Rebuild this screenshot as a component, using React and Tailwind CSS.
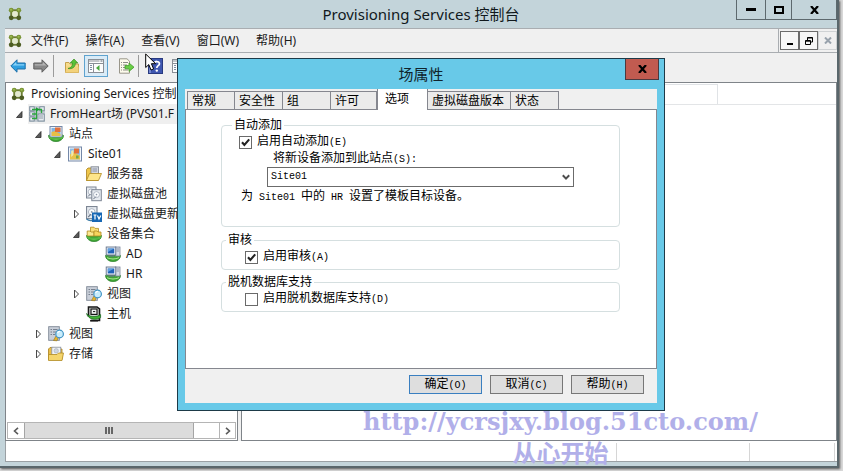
import React, { useState } from 'react';
import clsx from 'clsx';

// Console logo: four green nodes joined in a square
function NodesIcon({ className }) {
  return (
    <svg viewBox="0 0 14 14" className={clsx('h-[14px] w-[14px] shrink-0', className)}>
      <rect x="3.2" y="3.2" width="7.6" height="7.6" fill="#e4ead0" stroke="#6c7c35" strokeWidth="1.8" />
      <circle cx="3.2" cy="3.2" r="2.4" fill="#7a9436" />
      <circle cx="10.8" cy="3.2" r="2.4" fill="#7a9436" />
      <circle cx="3.2" cy="10.8" r="2.4" fill="#4c5c22" />
      <circle cx="10.8" cy="10.8" r="2.4" fill="#4c5c22" />
      <circle cx="3" cy="2.8" r="1" fill="#9dbb52" />
      <circle cx="10.6" cy="2.8" r="1" fill="#9dbb52" />
    </svg>
  );
}

function Svg16({ children }) {
  return (
    <svg viewBox="0 0 16 16" className="h-4 w-4 shrink-0">
      {children}
    </svg>
  );
}

function Dish() {
  return (
    <>
      <path d="M0.5 9.5C1.5 8 14.5 8 15.5 9.5C15.5 13 12 15.6 8 15.6S0.5 13 0.5 9.5Z" fill="#3fa535" stroke="#1f7a1f" strokeWidth="0.7" />
      <path d="M2 11.6C5 13.4 11 13.4 14 11.6" fill="none" stroke="#b4ec9c" strokeWidth="1.1" />
    </>
  );
}

function FarmIcon() {
  return (
    <Svg16>
      <rect width="16" height="16" fill="#c3cbd2" />
      <g fill="#e6ebf0" stroke="#6d7f90" strokeWidth="0.8">
        <rect x="0.8" y="0.8" width="4.4" height="4" />
        <rect x="10.8" y="0.8" width="4.4" height="4" />
        <rect x="0.8" y="5.9" width="4.4" height="4" />
        <rect x="0.8" y="11" width="4.4" height="4" />
        <rect x="9" y="8" width="6.2" height="7" />
      </g>
      <path d="M3 3.5H12.5V7M3 8H8M3 12.5H8M7.5 3.5V12.5" stroke="#2ba53c" strokeWidth="1.3" fill="none" />
      <path d="M7 1.2L10.4 3.5L7 5.8Z" fill="#199b33" />
      <path d="M10 10H14M10 12H14" stroke="#7a8794" strokeWidth="0.8" />
    </Svg16>
  );
}

function SitesIcon() {
  return (
    <Svg16>
      <Dish />
      <rect x="2" y="0.5" width="12" height="10.5" fill="#edf3fa" stroke="#7488a8" />
      <rect x="3.5" y="2" width="9" height="8" fill="#83b3e3" />
      <path d="M3.5 10V6L7 5L12.5 8V10Z" fill="#e6bf47" />
      <rect x="7" y="1.5" width="5.5" height="4.5" fill="#e2703a" />
      <path d="M1.2 10.2C4 12.4 12 12.4 14.8 10.2V12C12 14 4 14 1.2 12Z" fill="#54b844" />
    </Svg16>
  );
}

function SiteIcon() {
  return (
    <Svg16>
      <rect x="1.5" y="1" width="13" height="14" fill="#f4f7fb" stroke="#7488a8" />
      <rect x="3" y="2.5" width="10" height="11" fill="#8fc0e8" />
      <path d="M3 13.5V8.5L7 6L13 10V13.5Z" fill="#e8c34c" />
      <rect x="7" y="2.5" width="5" height="5" fill="#e2703a" />
      <path d="M4.2 5L6.4 4V9L4.2 11Z" fill="#f6e9a8" />
      <rect x="9" y="9.5" width="2.6" height="3" fill="#77a944" />
    </Svg16>
  );
}

function ServersIcon() {
  return (
    <Svg16>
      <path d="M0.5 14.5V3.5L2 2H5L6.5 3.5H12V14.5Z" fill="#efc64a" stroke="#a9801d" strokeWidth="0.8" />
      <rect x="5" y="0.8" width="7.6" height="8" fill="#d3d7df" stroke="#7a808c" strokeWidth="0.8" />
      <path d="M6.5 3H11M6.5 5H11" stroke="#8289a0" strokeWidth="0.9" />
      <path d="M0.5 14.5L3.5 7.5H15.5L12.5 14.5Z" fill="#fde58a" stroke="#b18a22" strokeWidth="0.8" />
    </Svg16>
  );
}

function DiskSheet({ x, y }) {
  return (
    <g transform={`translate(${x} ${y})`}>
      <rect x="0.5" y="0.5" width="9.5" height="11" fill="#e7ebf0" stroke="#7d8694" />
      <circle cx="5.2" cy="5.4" r="3" fill="#fafcfe" stroke="#a3acba" strokeWidth="0.8" />
      <circle cx="5.2" cy="5.4" r="0.8" fill="#8d97a8" />
      <path d="M2 10L4.6 7.4" stroke="#6d7889" />
    </g>
  );
}

function DiskPoolIcon() {
  return (
    <Svg16>
      <DiskSheet x={0} y={0.5} />
      <DiskSheet x={5.3} y={3.2} />
    </Svg16>
  );
}

function DiskUpdateIcon() {
  return (
    <Svg16>
      <g transform="scale(1.1)">
        <DiskSheet x={0} y={0} />
      </g>
      <path d="M0.5 13C3 15 5 15 7 14" stroke="#3f7da8" strokeWidth="1.4" fill="none" />
      <rect x="6" y="6.5" width="10" height="9.5" fill="#1767b4" />
      <path d="M7.5 9H10.5M9 9V13.5M11.5 9.5L13 13L14.8 9.5" stroke="#fff" strokeWidth="1.2" fill="none" />
    </Svg16>
  );
}

function CollectionsIcon() {
  return (
    <Svg16>
      <Dish />
      <path d="M4.5 7V1.2H8L9 2.4H12.5V7Z" fill="#f8df77" stroke="#b18a22" strokeWidth="0.8" />
      <path d="M1.2 10V5H4L5 6H8V10Z" fill="#fbe88f" stroke="#b18a22" strokeWidth="0.8" />
      <path d="M8 10V5H11L12 6H15V10Z" fill="#f6d55f" stroke="#b18a22" strokeWidth="0.8" />
      <path d="M1.2 10.2C4 12.4 12 12.4 14.8 10.2V12C12 14 4 14 1.2 12Z" fill="#54b844" />
    </Svg16>
  );
}

function DeviceIcon() {
  return (
    <Svg16>
      <Dish />
      <rect x="10.5" y="1" width="4.5" height="9" fill="#d5dbe6" stroke="#7a8699" strokeWidth="0.8" />
      <path d="M11.5 3H14M11.5 5H14" stroke="#7a8699" strokeWidth="0.8" />
      <rect x="1.2" y="1" width="9.6" height="8" fill="#e5eaf2" stroke="#66758c" strokeWidth="0.9" />
      <rect x="2.8" y="2.6" width="6.4" height="4.8" fill="#1f62b8" />
      <path d="M2.8 2.6H9.2L2.8 6Z" fill="#5f9fe0" />
      <path d="M3.5 10H9" stroke="#66758c" strokeWidth="1.2" />
    </Svg16>
  );
}

function ViewsIcon() {
  return (
    <Svg16>
      <rect x="0.7" y="0.7" width="10.6" height="13.6" fill="#c9cfd9" stroke="#7d8694" strokeWidth="0.9" />
      <path d="M2.5 3.5H4M5 3.5H9.5M2.5 6H4M5 6H8M2.5 8.5H4M5 8.5H7" stroke="#77808f" />
      <path d="M8 10L5.5 14.5L9 14.8L10 12Z" fill="#e5b530" stroke="#96731a" strokeWidth="0.6" />
      <circle cx="11.6" cy="8" r="3.8" fill="#c8ecfb" stroke="#3f93c4" strokeWidth="1.2" />
      <path d="M9.6 7A2.4 2.4 0 0 1 12 5.4" stroke="#fff" strokeWidth="1.1" fill="none" />
    </Svg16>
  );
}

function HostIcon() {
  return (
    <Svg16>
      <path d="M2.5 10.5V1H11L13.5 3V14.5H5" fill="#d9dfda" stroke="#171717" strokeWidth="1.6" />
      <rect x="5" y="3" width="6" height="5.4" fill="#f2f4f2" stroke="#171717" strokeWidth="1.2" />
      <path d="M7 5.6H9.2" stroke="#171717" />
      <path d="M0.6 7.5C2 11 11 11.5 14.6 8.6V11.6C11 14.4 2 14 0.6 7.5Z" fill="#41b335" stroke="#14601a" strokeWidth="0.7" />
      <path d="M4 14.8H12" stroke="#171717" strokeWidth="1.4" />
    </Svg16>
  );
}

function StoresIcon() {
  return (
    <Svg16>
      <path d="M0.5 13.5V3L2 1.5H5L6.5 3H14V13.5Z" fill="#e9bd45" stroke="#a9801d" strokeWidth="0.8" />
      <rect x="3.8" y="1.2" width="9" height="8" fill="#f1f3f6" stroke="#8b919c" strokeWidth="0.8" />
      <circle cx="8.2" cy="4.8" r="2.2" fill="#cfd6df" stroke="#a3acba" strokeWidth="0.6" />
      <path d="M0.5 14.5V8.5H9L10.5 7H15.5L14 14.5Z" fill="#f5d56c" stroke="#b18a22" strokeWidth="0.8" />
    </Svg16>
  );
}

function ArrowIcon({ fill, light, stroke, flip }) {
  return (
    <svg viewBox="0 0 16 16" className={clsx('h-4 w-4', flip && '-scale-x-100')}>
      <path d="M0.8 8L7 1.8V5H15.2V11H7V14.2Z" fill={fill} stroke={stroke} strokeLinejoin="round" />
      <path d="M2.6 7.6L6.2 4V6.2H14.2V7.6Z" fill={light} />
    </svg>
  );
}

function UpFolderIcon() {
  return (
    <Svg16>
      <path d="M1.5 14.5V4.5H5L6 6H14.5V14.5Z" fill="#f6dc8d" stroke="#c6a14c" />
      <path d="M1.5 14.5L2.5 8.5H14.5V14.5Z" fill="#f3d27b" />
      <path d="M4 10.5C7 10 8.6 8 8.6 5H6.2L10 1L13.8 5H11.4C11.4 9 8.5 11.4 4 10.5Z" fill="#5bc236" stroke="#3b8f24" strokeWidth="0.7" />
    </Svg16>
  );
}

function PaneIcon() {
  return (
    <svg viewBox="0 0 16 14" className="h-[14px] w-4">
      <rect x="0.5" y="0.5" width="15" height="13" fill="#fdfdfd" stroke="#8a8f96" />
      <path d="M1 2H11.5M1 4.5H15" stroke="#8a8f96" />
      <path d="M12.5 2H14.5" stroke="#55606c" />
      <path d="M5.5 5V13" stroke="#8a8f96" />
      <path d="M2 6.5H4M2 8.5H4M2 10.5H4" stroke="#7d8ea4" />
      <path d="M11.5 6V12L8 9Z" fill="#4aa83e" />
    </svg>
  );
}

function ExportIcon() {
  return (
    <Svg16>
      <path d="M1.5 0.8H9L11.5 3.2V15.2H1.5Z" fill="#fdfbec" stroke="#99968a" />
      <path d="M3 4.5H4M5 4.5H10M3 7H4M5 7H9M3 9.5H4M5 9.5H8M3 12H4M5 12H10" stroke="#8d8c86" />
      <path d="M7 7.6H11V5L16 9.2L11 13.4V10.8H7Z" fill="#6ad046" stroke="#419a2a" strokeWidth="0.8" />
    </Svg16>
  );
}

function HelpIcon() {
  return (
    <svg viewBox="0 0 15 16" className="h-4 w-[15px]">
      <rect x="0.5" y="0.5" width="14" height="15" fill="#3f57b0" stroke="#293a80" />
      <rect x="1" y="1" width="2" height="14" fill="#7386cf" />
      <path d="M6 6C6 2.6 11.8 2.8 11.4 6C11.2 7.8 8.8 7.6 8.8 10" fill="none" stroke="#fff" strokeWidth="1.8" />
      <circle cx="8.8" cy="12.6" r="1.2" fill="#fff" />
    </svg>
  );
}

function CloseGlyph() {
  return (
    <svg viewBox="0 0 9 8" className="h-2 w-[9px]">
      <path d="M1 0L8 8M8 0L1 8" stroke="#000" strokeWidth="2.2" />
    </svg>
  );
}

function Expander({ open }) {
  return (
    <svg viewBox="0 0 8 10" className="h-[10px] w-2">
      {open ? (
        <path d="M6 2.5V8.5H0.5Z" fill="#5a5a5a" stroke="#2c2c2c" strokeWidth="0.8" />
      ) : (
        <path d="M1.5 1L5.5 5L1.5 9Z" fill="#fff" stroke="#4a4a4a" />
      )}
    </svg>
  );
}

const menus = ['文件(F)', '操作(A)', '查看(V)', '窗口(W)', '帮助(H)'];

const tree = [
  {
    label: 'FromHeart场 (PVS01.F',
    icon: FarmIcon,
    open: true,
    selected: true,
    children: [
      {
        label: '站点',
        icon: SitesIcon,
        open: true,
        children: [
          {
            label: 'Site01',
            icon: SiteIcon,
            open: true,
            children: [
              { label: '服务器', icon: ServersIcon },
              { label: '虚拟磁盘池', icon: DiskPoolIcon },
              { label: '虚拟磁盘更新', icon: DiskUpdateIcon, open: false },
              {
                label: '设备集合',
                icon: CollectionsIcon,
                open: true,
                children: [
                  { label: 'AD', icon: DeviceIcon },
                  { label: 'HR', icon: DeviceIcon },
                ],
              },
              { label: '视图', icon: ViewsIcon, open: false },
              { label: '主机', icon: HostIcon },
            ],
          },
        ],
      },
      { label: '视图', icon: ViewsIcon, open: false },
      { label: '存储', icon: StoresIcon, open: false },
    ],
  },
];

function TreeNode({ node }) {
  const Icon = node.icon;
  return (
    <li>
      <div className="flex h-5 items-center">
        <span className="flex w-3 shrink-0">{node.open !== undefined && <Expander open={node.open} />}</span>
        <span className={clsx('flex h-5 flex-1 items-center gap-[5px] pl-px', node.selected && 'bg-[#efefef]')}>
          <Icon />
          {node.label}
        </span>
      </div>
      {node.children && (
        <ul className="pl-[19px]">
          {node.children.map((child) => (
            <TreeNode key={child.label} node={child} />
          ))}
        </ul>
      )}
    </li>
  );
}

// Song-style dialog text: latin characters take half the width of a Chinese one
function HalfWidth({ text }) {
  return text.split(/([\x20-\x7e]+)/).map((part, i) =>
    i % 2 ? (
      <span key={i} className="font-['Liberation_Mono',monospace] text-[10px] whitespace-pre">
        {part}
      </span>
    ) : (
      part
    )
  );
}

function Check({ id, label, defaultChecked }) {
  return (
    <div className="flex h-[14px] items-center gap-[5px]">
      <span className="relative flex">
        <input
          id={id}
          type="checkbox"
          defaultChecked={defaultChecked}
          className="peer h-[13px] w-[13px] appearance-none border border-[#6a6a6a] bg-white"
        />
        <svg viewBox="0 0 13 13" className="pointer-events-none absolute inset-0 hidden h-[13px] w-[13px] peer-checked:block">
          <path d="M3 6.2L5.4 9L10.2 3.4" fill="none" stroke="#222" strokeWidth="2.1" />
        </svg>
      </span>
      <label htmlFor={id}>
        <HalfWidth text={label} />
      </label>
    </div>
  );
}

const tabs = [
  { label: '常规', width: 'w-12' },
  { label: '安全性', width: 'w-12' },
  { label: '组', width: 'w-12' },
  { label: '许可', width: 'w-[46px]' },
  { label: '选项', width: 'w-[51px]' },
  { label: '虚拟磁盘版本', width: 'w-[83px]' },
  { label: '状态', width: 'w-12' },
];

function FarmDialog() {
  const [active, setActive] = useState('选项');

  return (
    <section
      role="dialog"
      aria-labelledby="farm-title"
      className="absolute top-[58px] left-[177px] w-[488px] border border-[#1d3a48] bg-[#68c9e8] px-[7px] pb-[7px] text-xs leading-[14px] text-black"
    >
      <header className="grid h-[30px] grid-cols-[1fr_auto_1fr]">
        <h2 id="farm-title" className="col-start-2 self-center font-['Noto_Sans','Noto_Sans_CJK_SC',sans-serif] text-[15px] text-[#10242c]">
          场属性
        </h2>
        <button aria-label="关闭" className="-mr-0.5 flex h-[21px] w-[34px] items-center justify-center justify-self-end border border-t-0 border-[#4b3a40] bg-[#c15b50]">
          <CloseGlyph />
        </button>
      </header>

      <div className="bg-[#f0f0f0]">
        <div role="tablist" className="flex h-5 items-end pl-0.5">
          {tabs.map(({ label, width }) => (
            <button
              key={label}
              role="tab"
              aria-selected={active === label}
              onClick={() => setActive(label)}
              className={clsx(
                'shrink-0 border-[#85878f] text-left whitespace-nowrap',
                width,
                active === label ? 'z-10 -mb-px h-[21px] border-x bg-white pb-0.5 pl-[7px]' : 'h-[18px] border-t border-r bg-[#ebebeb] pl-1 first:border-l'
              )}
            >
              {label}
            </button>
          ))}
        </div>

        <div className="h-[260px] border border-[#85878f] bg-white pt-[9px] pr-9 pl-[35px]">
          <fieldset className="h-[108px] rounded-[4px] border border-[#d5dfe0] px-[17px]">
            <legend className="-ml-[7px] px-0.5 leading-3">自动添加</legend>
            <div className="mt-1">
              <Check id="auto-add" label="启用自动添加(E)" defaultChecked />
            </div>
            <label htmlFor="site" className="mt-0.5 block h-[14px] pl-[34px]">
              <HalfWidth text="将新设备添加到此站点(S):" />
            </label>
            <div className="relative mt-0.5 mr-7 ml-7">
              <select
                id="site"
                defaultValue="Site01"
                className="block h-5 w-full appearance-none border border-[#6b6b6b] bg-white pl-[3px] font-['Liberation_Mono',monospace] text-[10px]"
              >
                <option>Site01</option>
              </select>
              <svg viewBox="0 0 8 7" className="pointer-events-none absolute top-[7px] right-1 h-[7px] w-2">
                <path d="M0.8 1.2L4 4.6L7.2 1.2" fill="none" stroke="#4d4d4d" strokeWidth="2" />
              </svg>
            </div>
            <p className="mt-0.5 pl-0.5">
              <HalfWidth text="为 Site01 中的 HR 设置了模板目标设备。" />
            </p>
          </fieldset>

          <fieldset className="mt-[7px] h-9 rounded-[4px] border border-[#d5dfe0] px-[23px]">
            <legend className="-ml-[19px] px-0.5 leading-3">审核</legend>
            <div className="mt-1">
              <Check id="audit" label="启用审核(A)" defaultChecked />
            </div>
          </fieldset>

          <fieldset className="mt-[6px] h-9 rounded-[4px] border border-[#d5dfe0] px-[23px]">
            <legend className="-ml-[19px] px-0.5 leading-3">脱机数据库支持</legend>
            <div className="mt-1">
              <Check id="offline" label="启用脱机数据库支持(D)" />
            </div>
          </fieldset>
        </div>

        <footer className="flex h-[34px] items-center justify-end gap-2 pt-px pr-[13px] pb-1">
          {['确定(O)', '取消(C)', '帮助(H)'].map((label, i) => (
            <button key={label} className={clsx('h-[19px] w-[73px] border bg-[#dedede] leading-4', i === 0 ? 'border-[#3a7fc0]' : 'border-[#777]')}>
              <HalfWidth text={label} />
            </button>
          ))}
        </footer>
      </div>
    </section>
  );
}

export default function App() {
  return (
    <div className="flex min-h-screen w-full bg-[#d8d8d8] pr-1 pb-[3px] font-['Noto_Sans','Noto_Sans_CJK_SC',sans-serif] text-xs text-[#1a1a1a]">
      <div className="relative flex flex-1 flex-col border-r-2 border-b-2 border-[#59666b] bg-[#c3d4da] pb-1 pl-[5px] shadow-[1px_1px_2px_#555]">
        {/* Title bar */}
        <header className="grid h-7 grid-cols-[1fr_auto_1fr]">
          <NodesIcon className="ml-[3px] self-center" />
          <h1 className="self-center text-[15px] text-[#10181c]">Provisioning Services 控制台</h1>
          <div className="flex h-5 justify-self-end border border-t-0 border-[#5d696e]">
            <button aria-label="最小化" className="flex w-7 items-center justify-center">
              <span className="h-[3px] w-[10px] bg-black" />
            </button>
            <button aria-label="最大化" className="flex w-[27px] items-center justify-center border-x border-[#5d696e]">
              <span className="h-2 w-[10px] border-2 border-black" />
            </button>
            <button aria-label="关闭" className="flex w-[44px] items-center justify-center">
              <CloseGlyph />
            </button>
          </div>
        </header>

        {/* Menu bar */}
        <nav className="flex h-[25px] items-center border-y border-[#a9adb1] bg-[#f0f0f0] pl-[3px]">
          <NodesIcon />
          <div className="flex flex-1 gap-[17px] pl-[9px]">
            {menus.map((menu) => (
              <button key={menu} className="whitespace-nowrap">
                {menu}
              </button>
            ))}
          </div>
          <div className="flex h-full items-center border-l border-[#a9adb1] pl-px">
            <button aria-label="最小化子窗口" className="flex h-[19px] w-[19px] items-end justify-center border border-[#6b6b6b] bg-[#f6f6f6] pb-1">
              <span className="h-0.5 w-1.5 bg-black" />
            </button>
            <button aria-label="还原子窗口" className="flex h-[19px] w-[19px] items-center justify-center border border-[#6b6b6b] bg-[#f6f6f6]">
              <svg viewBox="0 0 8 8" className="h-2 w-2">
                <path d="M2.5 3V0.5H7.5V5H6M2.5 1H7.5" fill="none" stroke="#000" />
                <path d="M0.5 3.5H5.5V7.5H0.5ZM0.5 4.2H5.5" fill="none" stroke="#000" />
              </svg>
            </button>
            <button aria-label="关闭子窗口" className="flex h-[19px] w-[19px] items-center justify-center border border-[#cfd2d4]">
              <svg viewBox="0 0 8 7" className="h-[7px] w-2">
                <path d="M1 0.5L7 6.5M7 0.5L1 6.5" stroke="#98a2ac" strokeWidth="2" />
              </svg>
            </button>
          </div>
        </nav>

        {/* Toolbar */}
        <div className="flex h-[29px] items-center bg-[#f0f0f0] pb-1 pl-[5px]">
          <button aria-label="后退">
            <ArrowIcon fill="#2f9fe0" light="#8ad2f7" stroke="#1d6fa8" />
          </button>
          <button aria-label="前进" className="ml-[7px]">
            <ArrowIcon fill="#878787" light="#b4b4b4" stroke="#5f5f5f" flip />
          </button>
          <span className="ml-1 h-[22px] w-px bg-[#9b9b9b]" />
          <button aria-label="上一级" className="ml-[10px]">
            <UpFolderIcon />
          </button>
          <button aria-label="显示控制台树" className="ml-1 flex h-[22px] w-6 items-center justify-center border border-[#5fa3cf] bg-[#d9ebf7]">
            <PaneIcon />
          </button>
          <button aria-label="导出列表" className="ml-[10px]">
            <ExportIcon />
          </button>
          <span className="ml-1 h-[22px] w-px bg-[#9b9b9b]" />
          <button aria-label="帮助" className="ml-[9px]">
            <HelpIcon />
          </button>
          <button aria-label="操作窗格" className="ml-[9px]">
            <PaneIcon />
          </button>
        </div>

        <main className="flex flex-1 bg-[#f0f0f0]">
          {/* Console tree */}
          <aside className="flex w-[233px] shrink-0 flex-col border border-[#7f8489] bg-white p-px">
            <div className="flex-1 overflow-hidden whitespace-nowrap">
              <div className="flex h-5 items-center gap-[6px] pl-1">
                <NodesIcon />
                Provisioning Services 控制台
              </div>
              <ul className="pl-[9px]">
                {tree.map((node) => (
                  <TreeNode key={node.label} node={node} />
                ))}
              </ul>
            </div>
            <div className="flex h-[17px] border border-[#b5b5b5]">
              <button aria-label="向左滚动" className="flex w-4 items-center justify-center">
                <svg viewBox="0 0 6 8" className="h-2 w-1.5">
                  <path d="M5 0.8L1.5 4L5 7.2" fill="none" stroke="#5a5a5a" strokeWidth="1.6" />
                </svg>
              </button>
              <div className="flex w-[170px] items-center justify-center gap-px border-x border-[#a5a5a5] bg-[#dcdcdc]">
                <span className="h-[7px] w-0.5 bg-[#666]" />
                <span className="h-[7px] w-0.5 bg-[#666]" />
                <span className="h-[7px] w-0.5 bg-[#666]" />
              </div>
              <button aria-label="向右滚动" className="ml-auto flex w-4 items-center justify-center border-l border-[#b5b5b5]">
                <svg viewBox="0 0 6 8" className="h-2 w-1.5">
                  <path d="M1 0.8L4.5 4L1 7.2" fill="none" stroke="#5a5a5a" strokeWidth="1.6" />
                </svg>
              </button>
            </div>
          </aside>

          {/* Details list */}
          <section className="ml-[3px] flex-1 border border-[#7f8489] bg-white">
            <div className="flex h-[22px] border-b border-[#e3e5e7]">
              <span className="mt-px w-[476px] border-t border-r border-[#e0e3e6]" />
            </div>
          </section>
        </main>

        {/* Status bar */}
        <footer className="flex h-[21px] justify-end border-b border-l border-[#9aa0a4] bg-white pt-0.5 pr-0.5">
          <span className="w-[133px] border-l border-[#d6d6d6]" />
          <span className="w-[86px] border-x border-[#d6d6d6]" />
        </footer>

        <FarmDialog />

        {/* Mouse pointer */}
        <svg viewBox="0 0 12 19" className="pointer-events-none absolute top-[53px] left-[145px] h-[19px] w-3">
          <path d="M0.7 1V14.5L3.8 11.6L6 17L8.6 15.9L6.4 10.7H10.6Z" fill="#fff" stroke="#000" />
        </svg>

        {/* Blog mark */}
        <div className="pointer-events-none absolute top-[408px] left-[363px] flex flex-col items-center text-[#b1afe9]">
          <p className="font-['DejaVu_Serif',serif] text-2xl leading-7 font-bold">http://ycrsjxy.blog.51cto.com/</p>
          <p className="pt-1 font-['Noto_Sans_CJK_SC',sans-serif] text-2xl leading-6 font-bold">从心开始</p>
        </div>
      </div>
    </div>
  );
}
